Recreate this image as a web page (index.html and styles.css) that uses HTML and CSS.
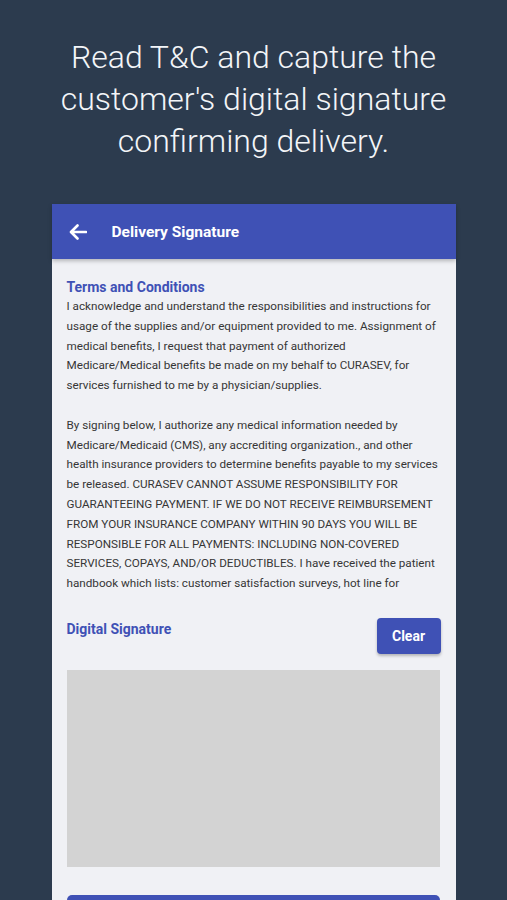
FILE: index.html
```html
<!DOCTYPE html>
<html lang="en">
<head>
<meta charset="utf-8">
<title>Delivery Signature</title>
<link rel="stylesheet" href="styles.css">
</head>
<body>
<div class="page">
  <h1 class="hero">Read T&amp;C and capture the customer's digital signature confirming delivery.</h1>
  <div class="phone">
    <header class="appbar">
      <svg class="back" width="18" height="16" viewBox="0 0 18 16" aria-hidden="true">
        <path d="M17 8H2.5M8.5 1.5L2 8l6.5 6.5" fill="none" stroke="#fff" stroke-width="2.6" stroke-linecap="round" stroke-linejoin="round"/>
      </svg>
      <span class="appbar-title">Delivery Signature</span>
    </header>
    <main class="content">
      <h2 class="section-title">Terms and Conditions</h2>
      <div class="terms">
        <p>I acknowledge and understand the responsibilities and instructions for<br>usage of the supplies and/or equipment provided to me. Assignment of<br>medical benefits, I request that payment of authorized<br>Medicare/Medical benefits be made on my behalf to CURASEV, for<br>services furnished to me by a physician/supplies.</p>
        <p>By signing below, I authorize any medical information needed by<br>Medicare/Medicaid (CMS), any accrediting organization., and other<br>health insurance providers to determine benefits payable to my services<br>be released. CURASEV CANNOT ASSUME RESPONSIBILITY FOR<br>GUARANTEEING PAYMENT. IF WE DO NOT RECEIVE REIMBURSEMENT<br>FROM YOUR INSURANCE COMPANY WITHIN 90 DAYS YOU WILL BE<br>RESPONSIBLE FOR ALL PAYMENTS: INCLUDING NON-COVERED<br>SERVICES, COPAYS, AND/OR DEDUCTIBLES. I have received the patient<br>handbook which lists: customer satisfaction surveys, hot line for</p>
      </div>
      <div class="sig-row">
        <h2 class="section-title">Digital Signature</h2>
        <button class="btn-clear" type="button">Clear</button>
      </div>
      <div class="sig-pad"></div>
      <button class="btn-submit" type="button" aria-label="Submit"></button>
    </main>
  </div>
</div>
</body>
</html>
```

FILE: styles.css
```css
* { box-sizing: border-box; }
html, body {
  margin: 0;
  padding: 0;
  height: 900px;
  overflow: hidden;
}
body {
  background: #2c3b4e;
  font-family: Roboto, "Noto Sans", Arial, sans-serif;
}
.page {
  display: flex;
  flex-direction: column;
  align-items: center;
  padding-top: 36px;
}
.hero {
  margin: 0;
  width: 440px;
  color: #f3f5f8;
  font-weight: 300;
  font-size: 32px;
  line-height: 42px;
  text-align: center;
}
.phone {
  margin-top: 42px;
  width: 404px;
  background: #f0f1f5;
  display: flex;
  flex-direction: column;
  flex-shrink: 0;
}
.appbar {
  flex: 0 0 55px;
  height: 55px;
  background: #3f51b5;
  display: flex;
  align-items: center;
  padding-left: 17px;
  gap: 25px;
  box-shadow: 0 2px 4px rgba(0,0,0,0.25);
  position: relative;
  z-index: 1;
}
.back { display: block; flex-shrink: 0; }
.appbar-title {
  color: #fff;
  font-weight: 700;
  font-size: 15.5px;
}
.content {
  padding: 19px 16px 0 15px;
  display: flex;
  flex-direction: column;
}
.section-title {
  margin: 0;
  color: #3f51b5;
  font-size: 14px;
  line-height: 18px;
  font-weight: 700;
}
.terms {
  color: #363636;
  font-size: 11.7px;
  line-height: 19.8px;
  white-space: nowrap;
  padding-top: 1px;
}
.terms p { margin: 0 0 19.8px; }
.terms p:last-child { margin-bottom: 0; }
.sig-row {
  margin-top: 24px;
  display: flex;
  justify-content: space-between;
  align-items: flex-start;
}
.sig-row .section-title { margin-top: 2px; }
.btn-clear {
  width: 64px;
  height: 36px;
  border: 0;
  border-radius: 4px;
  background: #3f51b5;
  color: #fff;
  font-family: inherit;
  font-weight: 700;
  font-size: 14px;
  box-shadow: 0 2px 3px rgba(0,0,0,0.25);
  margin-right: -1px;
}
.sig-pad {
  margin-top: 16px;
  height: 197px;
  background: #d3d3d3;
}
.btn-submit {
  margin-top: 28px;
  height: 44px;
  border: 0;
  border-radius: 5px;
  background: #3f51b5;
}
```
